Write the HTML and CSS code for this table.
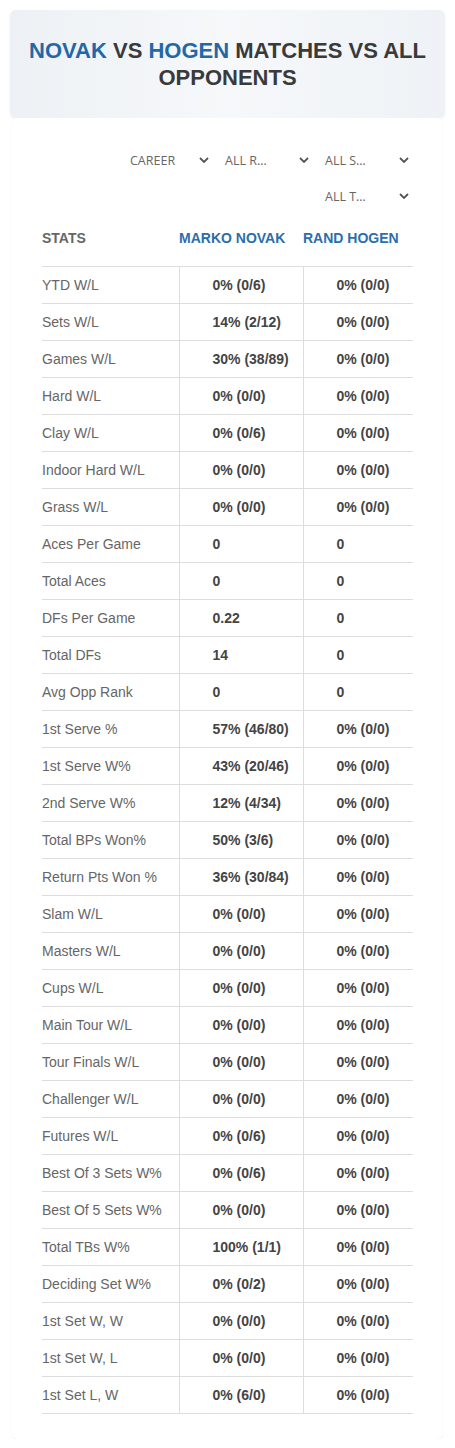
FILE: index.html
```html
<!DOCTYPE html>
<html>
<head>
    <title>Novak vs Hogen</title>
    <link rel="stylesheet" href="styles.css">
</head>
<body>
    <div class="page">
        <div class="hero">
            <h1><span class="blue">NOVAK</span> VS <span class="blue">HOGEN</span> MATCHES VS ALL OPPONENTS</h1>
        </div>
        <div class="card">
            <div class="filters">
                <div class="filter first"><span>CAREER</span><svg viewBox="0 0 10 6" width="10" height="6"><path d="M1 1l4 4 4-4" fill="none" stroke="#555" stroke-width="1.8"/></svg></div>
                <div class="filter"><span>ALL R…</span><svg viewBox="0 0 10 6" width="10" height="6"><path d="M1 1l4 4 4-4" fill="none" stroke="#555" stroke-width="1.8"/></svg></div>
                <div class="filter"><span>ALL S…</span><svg viewBox="0 0 10 6" width="10" height="6"><path d="M1 1l4 4 4-4" fill="none" stroke="#555" stroke-width="1.8"/></svg></div>
                <div class="filter"><span>ALL T…</span><svg viewBox="0 0 10 6" width="10" height="6"><path d="M1 1l4 4 4-4" fill="none" stroke="#555" stroke-width="1.8"/></svg></div>
            </div>
            <table class="stats">
                <thead>
                    <tr>
                        <th class="label-head">STATS</th>
                        <th class="player">MARKO NOVAK</th>
                        <th class="player">RAND HOGEN</th>
                    </tr>
                </thead>
                <tbody id="rows"></tbody>
            </table>
        </div>
    </div>
    <script>
        let rows = [
            ["YTD W/L", "0% (0/6)", "0% (0/0)"],
            ["Sets W/L", "14% (2/12)", "0% (0/0)"],
            ["Games W/L", "30% (38/89)", "0% (0/0)"],
            ["Hard W/L", "0% (0/0)", "0% (0/0)"],
            ["Clay W/L", "0% (0/6)", "0% (0/0)"],
            ["Indoor Hard W/L", "0% (0/0)", "0% (0/0)"],
            ["Grass W/L", "0% (0/0)", "0% (0/0)"],
            ["Aces Per Game", "0", "0"],
            ["Total Aces", "0", "0"],
            ["DFs Per Game", "0.22", "0"],
            ["Total DFs", "14", "0"],
            ["Avg Opp Rank", "0", "0"],
            ["1st Serve %", "57% (46/80)", "0% (0/0)"],
            ["1st Serve W%", "43% (20/46)", "0% (0/0)"],
            ["2nd Serve W%", "12% (4/34)", "0% (0/0)"],
            ["Total BPs Won%", "50% (3/6)", "0% (0/0)"],
            ["Return Pts Won %", "36% (30/84)", "0% (0/0)"],
            ["Slam W/L", "0% (0/0)", "0% (0/0)"],
            ["Masters W/L", "0% (0/0)", "0% (0/0)"],
            ["Cups W/L", "0% (0/0)", "0% (0/0)"],
            ["Main Tour W/L", "0% (0/0)", "0% (0/0)"],
            ["Tour Finals W/L", "0% (0/0)", "0% (0/0)"],
            ["Challenger W/L", "0% (0/0)", "0% (0/0)"],
            ["Futures W/L", "0% (0/6)", "0% (0/0)"],
            ["Best Of 3 Sets W%", "0% (0/6)", "0% (0/0)"],
            ["Best Of 5 Sets W%", "0% (0/0)", "0% (0/0)"],
            ["Total TBs W%", "100% (1/1)", "0% (0/0)"],
            ["Deciding Set W%", "0% (0/2)", "0% (0/0)"],
            ["1st Set W, W", "0% (0/0)", "0% (0/0)"],
            ["1st Set W, L", "0% (0/0)", "0% (0/0)"],
            ["1st Set L, W", "0% (6/0)", "0% (0/0)"]
        ];

        document.getElementById("rows").innerHTML = rows.map(r =>
            `<tr><td class="label">${r[0]}</td><td class="val">${r[1]}</td><td class="val">${r[2]}</td></tr>`
        ).join("");
    </script>
</body>
</html>
```

FILE: styles.css
```css
body {
    margin: 0;
    font-family: "Liberation Sans", Arial, sans-serif;
    background: #fff;
    color: #333;
}
.page {
    padding: 10px 10px 0 10px;
}
.hero {
    height: 108px;
    display: flex;
    align-items: center;
    justify-content: center;
    border-radius: 6px;
    background: linear-gradient(90deg, #edf1f5 0%, #f6f8fa 50%, #eef2f6 100%);
    box-shadow: 0 1px 3px rgba(0, 0, 0, 0.06);
}
.hero h1 {
    margin: 0;
    padding: 0 12px;
    font-size: 22px;
    line-height: 27px;
    text-align: center;
    color: #3a3a3a;
    font-weight: bold;
}
.blue {
    color: #2268a6;
}
.card {
    margin: 0 2px;
    padding: 24px 30px 25px 30px;
    background: #fff;
    border-radius: 6px;
    box-shadow: 0 1px 2px rgba(0, 0, 0, 0.07);
}
.filters {
    display: flex;
    flex-wrap: wrap;
    justify-content: flex-end;
    margin-left: 70px;
}
.filter {
    width: 100px;
    height: 36px;
    box-sizing: border-box;
    display: flex;
    align-items: center;
    justify-content: space-between;
    padding: 0 4px 0 12px;
    font-family: "Open Sans", sans-serif;
    font-size: 12.5px;
    color: #666;
}
.filter.first {
    padding-left: 17px;
}
.stats {
    width: 100%;
    border-collapse: collapse;
}
.stats th {
    height: 48px;
    padding: 0 0 4px 0;
    font-size: 14px;
    font-weight: bold;
    text-align: left;
    border-bottom: 1px solid #ddd;
}
.label-head {
    width: 137px;
    color: #666;
}
.player {
    color: #2a6ead;
}
.stats th:nth-child(2) {
    width: 124px;
}
.stats td {
    height: 36px;
    padding: 0;
    font-size: 14px;
    border-bottom: 1px solid #ddd;
}
.label {
    color: #666;
}
.val {
    padding-left: 33px !important;
    font-weight: bold;
    color: #444;
    border-left: 1px solid #ddd;
}
```
